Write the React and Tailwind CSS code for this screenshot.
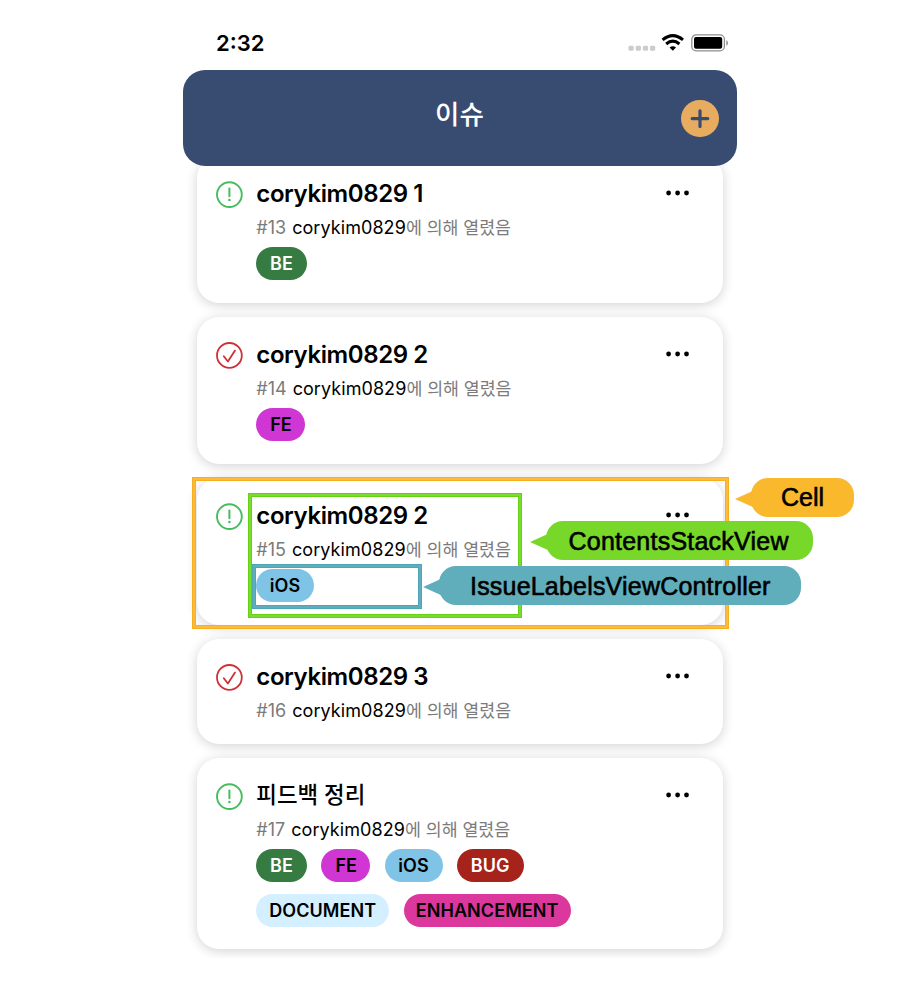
const sans = "font-['Inter','Noto_Sans_CJK_KR',sans-serif]";

const pillStyles = {
  BE: "w-[51px] bg-[#367b42] text-white",
  FE: "w-[49px] bg-[#d036d3] pl-px text-black",
  iOS: "w-[58px] bg-[#7fc3e6] text-black",
  BUG: "w-[67px] bg-[#a5231b] text-white",
  DOCUMENT: "w-[133.4px] bg-[#d4efff] text-black",
  ENHANCEMENT: "w-[167px] bg-[#db379d] text-black",
};

function Pill({ name }) {
  return (
    <span className={`flex h-[33px] items-center justify-center rounded-full pt-px text-[18px] font-semibold leading-none tracking-[0.08px] whitespace-nowrap ${pillStyles[name]}`}>
      {name}
    </span>
  );
}

function StatusIcon({ open }) {
  return open ? (
    <svg className="h-7 w-7 shrink-0" viewBox="0 0 28 28" fill="none" stroke="#45bd5c" strokeWidth="1.9" strokeLinecap="round">
      <circle cx="14.4" cy="13.6" r="12.4" />
      <path d="M14.4 7.6v7.6" strokeWidth="2" />
      <circle cx="14.4" cy="19" r="1.3" fill="#45bd5c" stroke="none" />
    </svg>
  ) : (
    <svg className="h-7 w-7 shrink-0" viewBox="0 0 28 28" fill="none" stroke="#cf3038" strokeWidth="1.8" strokeLinecap="round" strokeLinejoin="round">
      <circle cx="14.4" cy="13.4" r="12.4" />
      <path d="M8.8 14.2l4.1 5.3L20 8.6" strokeWidth="1.8" />
    </svg>
  );
}

function Dots() {
  return (
    <svg className="ml-auto mt-[11px] h-[6px] w-6 shrink-0" viewBox="0 0 24 6" fill="#000">
      <circle cx="2.6" cy="3" r="2.4" />
      <circle cx="11.6" cy="3" r="2.4" />
      <circle cx="20.5" cy="3" r="2.4" />
    </svg>
  );
}

function Issue({ title, number, open, labels = [], size, titleStyle = "text-[24px] font-semibold tracking-[-0.4px]" }) {
  return (
    <article className={`mx-[14px] flex shrink-0 rounded-[22px] bg-white pl-[18px] pr-[33px] pt-[23px] shadow-[0_2px_12px_rgba(0,0,0,0.18)] ${size}`}>
      <div className="mt-[2px]"><StatusIcon open={open} /></div>
      <div className="ml-[13.3px] flex w-[340px] flex-col">
        <h2 className={`h-[30px] whitespace-nowrap ${titleStyle} leading-[30px]`}>{title}</h2>
        <p className="mt-[7px] h-6 whitespace-nowrap text-[17.3px] leading-6 text-[#7b7b7b]">
          <span className="text-[18px]">#{number}</span>
          <span className="ml-[6px] text-[18px] tracking-[0.07px] text-black">corykim0829</span>에 의해 열렸음
        </p>
        <div className="-ml-[0.3px] mt-[7px] flex flex-wrap gap-x-[14.25px] gap-y-[11.5px]">
          {labels.map((l) => <Pill key={l} name={l} />)}
        </div>
      </div>
      <Dots />
    </article>
  );
}

function Callout({ className, tip, text, children }) {
  return (
    <div className={`absolute z-10 flex h-[39px] items-center rounded-[17px] font-['Liberation_Sans',Arial,sans-serif] text-[25px] leading-none whitespace-nowrap text-black ${className}`}>
      <svg className={`absolute -left-[16px] top-[12px] h-[18px] w-[20px] ${tip}`} viewBox="0 0 20 18">
        <path d="M0 9L20 0V18Z" fill="currentColor" />
      </svg>
      <span className={`[-webkit-text-stroke:0.6px_black] ${text}`}>{children}</span>
    </div>
  );
}

export default function App() {
  return (
    <div className={`relative h-[984px] w-[900px] overflow-hidden bg-white text-black ${sans}`}>
      <div className="ml-[183px] flex h-[957px] w-[554px] flex-col">
        <div className="flex h-[70px] shrink-0 items-start pl-[33px] pr-[9px] pt-[29px]">
          <span className="text-[22px] font-semibold leading-[28px]">2:32</span>
          <svg className="ml-auto mt-[4px] h-5 w-[100px]" viewBox="0 0 100 20">
            <g fill="#ccc">
              <rect x="0.5" y="12.8" width="5.2" height="5" rx="1.4" />
              <rect x="7.7" y="12.8" width="5.2" height="5" rx="1.4" />
              <rect x="14.9" y="12.8" width="5.2" height="5" rx="1.4" />
              <rect x="22" y="12.8" width="5.2" height="5" rx="1.4" />
            </g>
            <g fill="none" stroke="#000" strokeWidth="3.1">
              <path d="M34.6 6.9Q44.8-1.5 55 6.9" />
              <path d="M38.2 11Q44.8 5.4 51.4 11" />
            </g>
            <path d="M41.6 14.6Q44.8 12.1 48 14.6L44.8 17.8Z" fill="#000" />
            <rect x="63.8" y="1.9" width="32.6" height="16" rx="4.4" fill="none" stroke="#8f8f8f" strokeWidth="1.3" />
            <rect x="66" y="4.1" width="28.2" height="11.6" rx="2" fill="#000" />
            <path d="M98.3 7.1Q100 8 100 9.9T98.3 12.7Z" fill="#8f8f8f" />
          </svg>
        </div>
        <header className="relative z-10 flex h-[95.5px] shrink-0 items-start rounded-[22px] bg-[#384b70] pr-[18px]">
          <h1 className="ml-[252px] mt-[24px] text-[26.5px] font-medium leading-10 text-white">이슈</h1>
          <button className="ml-auto mt-[30px] flex h-[37px] w-[38px] items-center justify-center rounded-full bg-[#e8ac61]">
            <svg className="h-5 w-5" viewBox="0 0 20 20" stroke="#384b70" strokeWidth="3.2" strokeLinecap="round">
              <path d="M10 1.8v15.6M2.2 9.6h15.6" />
            </svg>
          </button>
        </header>
        <main className="-mx-[16px] -mt-[9.5px] flex h-[802px] shrink-0 flex-col gap-[14px] overflow-hidden px-[16px]">
          <Issue title="corykim0829 1" number={13} open labels={["BE"]} size="h-[147px]" />
          <Issue title="corykim0829 2" number={14} labels={["FE"]} size="h-[147px]" />
          <Issue title="corykim0829 2" number={15} open labels={["iOS"]} size="h-[147px]" />
          <Issue title="corykim0829 3" number={16} size="h-[105px]" />
          <Issue title="피드백 정리" titleStyle="-mt-px mb-px text-[22.4px] font-medium" number={17} open labels={["BE", "FE", "iOS", "BUG", "DOCUMENT", "ENHANCEMENT"]} size="h-[191px]" />
        </main>
      </div>
      <div className="absolute left-[193px] top-[478px] h-[150px] w-[535px] border-2 border-[#fbbb40] shadow-[0_0_0_1px_#f9ae1c,inset_0_0_0_1px_#f9ae1c]" />
      <div className="absolute left-[249px] top-[494px] h-[123px] w-[272px] border-2 border-[#7cda33] shadow-[0_0_0_1px_#63d210,inset_0_0_0_1px_#63d210]" />
      <div className="absolute left-[253px] top-[565px] h-[43px] w-[168px] border-2 border-[#60adbb] shadow-[0_0_0_1px_#4ca8b7,inset_0_0_0_1px_#4ca8b7]" />
      <Callout className="left-[751px] top-[478px] w-[103px] bg-[#fab92d] pl-[30px]" tip="text-[#fab92d]" text="">Cell</Callout>
      <Callout className="left-[545.5px] top-[521px] w-[267px] bg-[#78d829] pl-[23px] pt-[2px]" tip="text-[#78d829]" text="tracking-[0.23px]">ContentsStackView</Callout>
      <Callout className="left-[439px] top-[566px] w-[362px] bg-[#60adbb] pl-[31px] pt-[2px]" tip="text-[#60adbb]" text="tracking-[0.2px]">IssueLabelsViewController</Callout>
    </div>
  );
}
